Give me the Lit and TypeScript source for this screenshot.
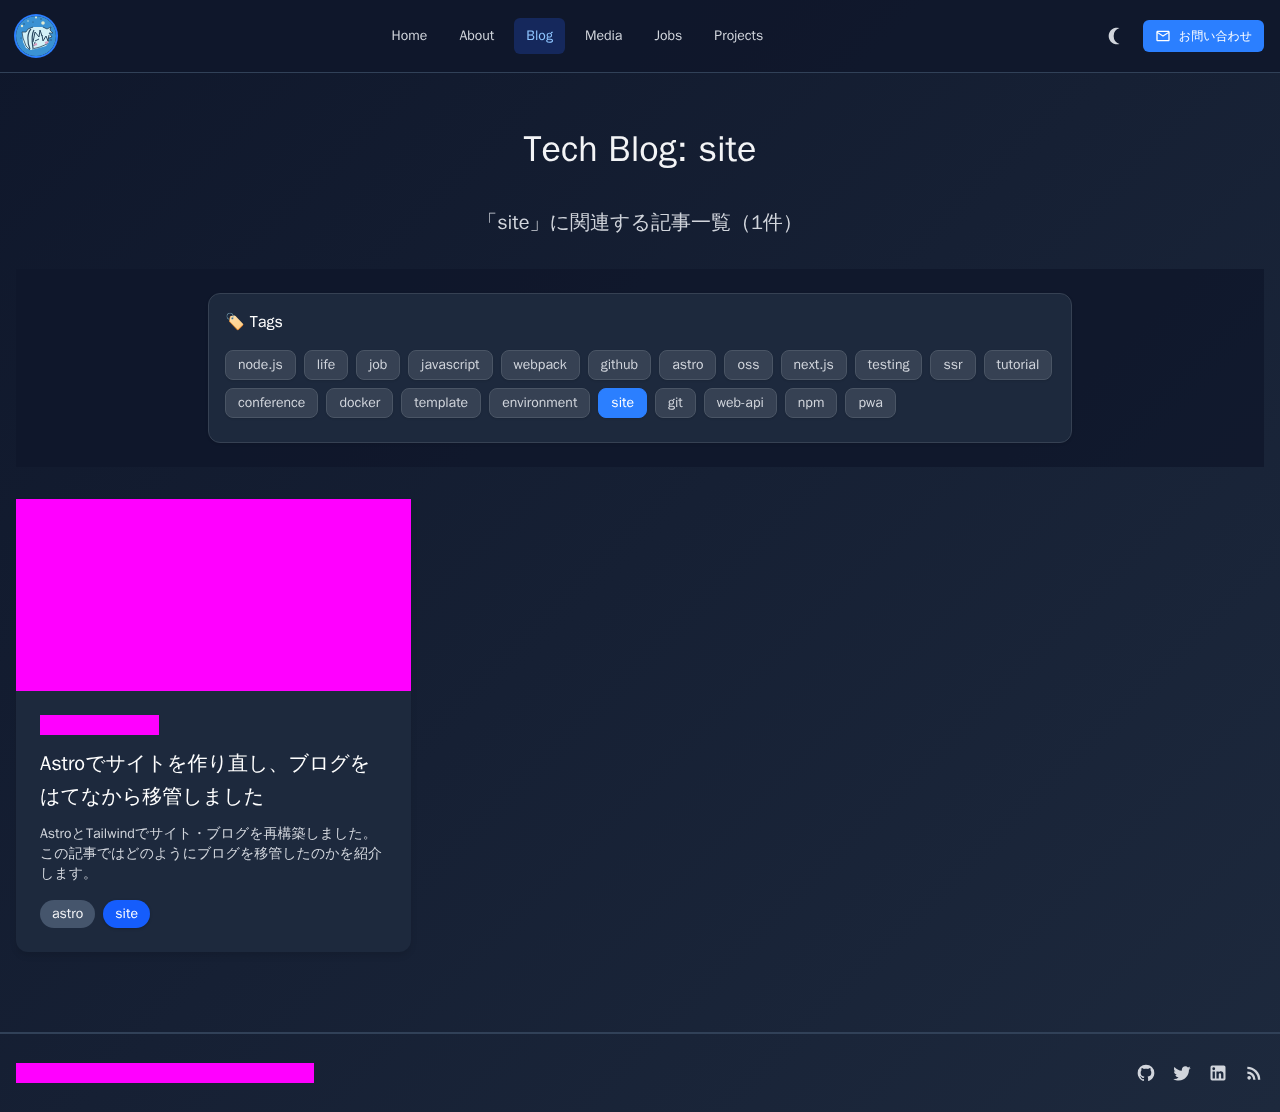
import { LitElement, html, svg, css } from "lit";
import { customElement } from "lit/decorators.js";
import { classMap } from "lit/directives/class-map.js";

const NAV = ["Home", "About", "Blog", "Media", "Jobs", "Projects"];

const TAGS = [
  "node.js", "life", "job", "javascript", "webpack", "github", "astro", "oss",
  "next.js", "testing", "ssr", "tutorial", "conference", "docker", "template",
  "environment", "site", "git", "web-api", "npm", "pwa",
];

const CURRENT_TAG = "site";

const SOCIAL = [
  {
    name: "GitHub",
    path: svg`<path d="M12 2A10 10 0 0 0 2 12c0 4.42 2.87 8.17 6.84 9.5.5.08.66-.23.66-.5v-1.69c-2.77.6-3.36-1.34-3.36-1.34-.46-1.16-1.11-1.47-1.11-1.47-.91-.62.07-.6.07-.6 1 .07 1.53 1.03 1.53 1.03.87 1.52 2.34 1.07 2.91.83.09-.65.35-1.09.63-1.34-2.22-.25-4.55-1.11-4.55-4.92 0-1.11.38-2 1.03-2.71-.1-.25-.45-1.29.1-2.64 0 0 .84-.27 2.75 1.02.79-.22 1.65-.33 2.5-.33s1.71.11 2.5.33c1.91-1.29 2.75-1.02 2.75-1.02.55 1.35.2 2.39.1 2.64.65.71 1.03 1.6 1.03 2.71 0 3.82-2.34 4.66-4.57 4.91.36.31.69.92.69 1.85V21c0 .27.16.59.67.5C19.14 20.16 22 16.42 22 12A10 10 0 0 0 12 2"/>`,
  },
  {
    name: "Twitter",
    path: svg`<path d="M22.46 6c-.77.35-1.6.58-2.46.69.88-.53 1.56-1.37 1.88-2.38-.83.5-1.75.85-2.72 1.05C18.37 4.5 17.26 4 16 4c-2.35 0-4.27 1.92-4.27 4.29 0 .34.04.67.11.98C8.28 9.09 5.11 7.38 3 4.79c-.37.63-.58 1.37-.58 2.15 0 1.49.75 2.81 1.91 3.56-.71 0-1.37-.2-1.95-.5v.03c0 2.08 1.48 3.82 3.44 4.21a4.2 4.2 0 0 1-1.93.07 4.28 4.28 0 0 0 4 2.98 8.52 8.52 0 0 1-5.33 1.84q-.51 0-1.02-.06C3.44 20.29 5.7 21 8.12 21 16 21 20.33 14.46 20.33 8.79c0-.19 0-.37-.01-.56.84-.6 1.56-1.36 2.14-2.23"/>`,
  },
  {
    name: "LinkedIn",
    path: svg`<path d="M19 3a2 2 0 0 1 2 2v14a2 2 0 0 1-2 2H5a2 2 0 0 1-2-2V5a2 2 0 0 1 2-2zm-.5 15.5v-5.3a3.26 3.26 0 0 0-3.26-3.26c-.85 0-1.84.52-2.32 1.3v-1.11h-2.79v8.37h2.79v-4.93c0-.77.62-1.4 1.39-1.4a1.4 1.4 0 0 1 1.4 1.4v4.93zM6.88 8.56a1.68 1.68 0 0 0 1.68-1.68c0-.93-.75-1.69-1.68-1.69a1.69 1.69 0 0 0-1.69 1.69c0 .93.76 1.68 1.69 1.68m1.39 9.94v-8.37H5.5v8.37z"/>`,
  },
  {
    name: "RSS",
    path: svg`<path d="M6.18 15.64a2.18 2.18 0 0 1 2.18 2.18C8.36 19 7.38 20 6.18 20 5 20 4 19 4 17.82a2.18 2.18 0 0 1 2.18-2.18M4 4.44A15.56 15.56 0 0 1 19.56 20h-2.83A12.73 12.73 0 0 0 4 7.27zm0 5.66a9.9 9.9 0 0 1 9.9 9.9h-2.83A7.07 7.07 0 0 0 4 12.93z"/>`,
  },
];

@customElement("site-header")
export class SiteHeader extends LitElement {
  static styles = css`
    :host { display: block; background: rgb(15 23 43 / 0.9); border-bottom: 1px solid #314158; }
    .bar { display: flex; align-items: center; justify-content: space-between; height: 72px; padding: 0 16px; }
    a { color: inherit; text-decoration: none; }
    .logo { display: block; width: 40px; height: 40px; border-radius: 50%; box-shadow: 0 0 0 2px #2b7fff; }
    .logo svg { display: block; width: 40px; height: 40px; }
    nav { display: flex; gap: 8px; }
    .link { padding: 8px 12px; border-radius: 6px; font-size: 14px; line-height: 20px; color: #d1d5dc; }
    .current { background: rgb(28 57 142 / 0.5); color: #8ec5ff; }
    .actions { display: flex; align-items: center; gap: 8px; }
    .theme { display: flex; padding: 8px; border: 0; border-radius: 8px; background: none; color: #d1d5dc; }
    .theme svg { width: 20px; height: 20px; fill: currentColor; }
    .contact { display: flex; align-items: center; gap: 8px; padding: 8px 12px; border-radius: 6px; background: #2b7fff; color: #fff; font-size: 12px; line-height: 16px; }
    .contact svg { width: 16px; height: 16px; fill: currentColor; }
  `;

  render() {
    return html`
      <header class="bar">
        <a class="logo" href="#" aria-label="Home">
          <svg viewBox="0 0 40 40" aria-hidden="true">
            <circle cx="20" cy="20" r="20" fill="#3a92d3" />
            <g fill="#e2ead0">
              <circle cx="27" cy="7" r="1.800" /><circle cx="6" cy="10" r="1.200" />
              <circle cx="20" cy="1.500" r="1" /><circle cx="12" cy="5" r=".7" />
            </g>
            <g fill="#28506e">
              <circle cx="8" cy="8" r=".7" /><circle cx="25" cy="3" r=".7" /><circle cx="17" cy="6" r=".6" /><circle cx="5" cy="22" r=".6" /><circle cx="35" cy="24" r=".7" />
            </g>
            <path d="M6 16l4 0 2-3 6-2 8 0 5 2 4-2-1 3 3 3-4 0 3 4-3 1 0 4-3 4-7 2-8 2-5-2-3-6z" fill="#d4f1f7" />
            <path d="M6 16l4 0 2-3 5-2M6 16l1 6 3 8 4 4M27 11l4 2 4-2-1 3 3 3-4 0 3 4-3 1M33 24l-2 4-7 3-8 2" fill="none" stroke="#28465e" stroke-width=".8" stroke-linejoin="round" />
            <path d="M15 13c-4 4-4 13-1 20M18 14c-3 5-2 12-1 18" fill="none" stroke="#28465e" stroke-width="1.200" />
            <path d="M17 26l2-10 4 5 1-7 2 6M19 25l4-2M26 19l1 6 3-5 2 5 1-6M18 30l1-4" fill="none" stroke="#28465e" stroke-width="1" stroke-linejoin="round" />
            <path d="M18 29l3-1M29 27l3-1" stroke="#d99abf" stroke-width="2" />
          </svg>
        </a>
        <nav aria-label="Main">
          ${NAV.map((name) => html`<a class=${classMap({ link: true, current: name === "Blog" })} href="#">${name}</a>`)}
        </nav>
        <div class="actions">
          <button class="theme" type="button" aria-label="Toggle theme">
            <svg viewBox="0 0 24 24" aria-hidden="true"><path d="M2 12a10 10 0 0 0 13 9.540a10 10 0 0 1 0-19.080A10 10 0 0 0 2 12" /></svg>
          </button>
          <a class="contact" href="#">
            <svg viewBox="0 0 24 24" aria-hidden="true"><path d="M22 6c0-1.100-.9-2-2-2H4c-1.100 0-2 .9-2 2v12c0 1.100.9 2 2 2h16c1.100 0 2-.9 2-2zm-2 0l-8 5-8-5zm0 12H4V8l8 5 8-5z" /></svg>
            <span>お問い合わせ</span>
          </a>
        </div>
      </header>
    `;
  }
}

@customElement("tag-panel")
export class TagPanel extends LitElement {
  static styles = css`
    :host { display: block; padding: 24px 16px; background: rgb(15 23 43 / 0.8); }
    .panel { box-sizing: border-box; max-width: 864px; margin: 0 auto; padding: 16px 16px 24px; border: 1px solid #364153; border-radius: 12px; background: #1d293d; box-shadow: 0 1px 3px rgb(0 0 0 / 0.1); }
    h2 { margin: 0 0 16px; font-size: 16px; font-weight: 400; line-height: 24px; color: #fff; }
    .list { display: flex; flex-wrap: wrap; gap: 8px; }
    .tag { padding: 4px 12px; border: 1px solid #4a5565; border-radius: 8px; background: #364153; color: #d1d5dc; font-size: 14px; line-height: 20px; text-decoration: none; box-shadow: 0 1px 2px rgb(0 0 0 / 0.1); }
    .active { border-color: #2b7fff; background: #2b7fff; color: #fff; }
  `;

  render() {
    return html`
      <section class="panel">
        <h2>🏷️ Tags</h2>
        <div class="list">
          ${TAGS.map((tag) => html`<a class=${classMap({ tag: true, active: tag === CURRENT_TAG })} href="#">${tag}</a>`)}
        </div>
      </section>
    `;
  }
}

@customElement("post-card")
export class PostCard extends LitElement {
  static styles = css`
    :host { display: block; border-radius: 0 0 12px 12px; background: #1d293d; box-shadow: 0 4px 6px rgb(0 0 0 / 0.1); }
    .cover { height: 192px; background: #f0f; }
    .body { padding: 24px; }
    .date { width: 119px; height: 20px; margin-bottom: 12px; background: #f0f; }
    h2 { margin: 0 0 11px; font-size: 20px; font-weight: 400; line-height: 33px; color: #fff; }
    p { margin: 0 0 16px; font-size: 14px; line-height: 20px; color: #d1d5dc; }
    .tags { display: flex; gap: 8px; }
    .pill { padding: 4px 12px; border-radius: 14px; background: #45556c; color: #f3f4f6; font-size: 14px; line-height: 20px; text-decoration: none; }
    .active { background: #155dfc; color: #fff; box-shadow: 0 1px 3px rgb(0 0 0 / 0.2); }
  `;

  render() {
    return html`
      <article>
        <div class="cover"></div>
        <div class="body">
          <div class="date"></div>
          <h2>Astroでサイトを作り直し、ブログをはてなから移管しました</h2>
          <p>AstroとTailwindでサイト・ブログを再構築しました。この記事ではどのようにブログを移管したのかを紹介します。</p>
          <div class="tags">
            <a class="pill" href="#">astro</a>
            <a class="pill active" href="#">site</a>
          </div>
        </div>
      </article>
    `;
  }
}

@customElement("site-footer")
export class SiteFooter extends LitElement {
  static styles = css`
    :host { display: block; border-top: 2px solid #314158; }
    .bar { display: flex; align-items: center; justify-content: space-between; height: 78px; padding: 0 16px; }
    .copyright { width: 298px; height: 20px; background: #f0f; }
    .social { display: flex; gap: 16px; color: #d1d5dc; }
    a { display: block; color: inherit; }
    svg { display: block; width: 20px; height: 20px; fill: currentColor; }
  `;

  render() {
    return html`
      <footer class="bar">
        <div class="copyright"></div>
        <div class="social">
          ${SOCIAL.map((s) => html`<a href="#" aria-label=${s.name}><svg viewBox="0 0 24 24" aria-hidden="true">${s.path}</svg></a>`)}
        </div>
      </footer>
    `;
  }
}

@customElement("app-root")
export class AppRoot extends LitElement {
  static styles = css`
    :host {
      display: flex;
      flex-direction: column;
      min-height: 100vh;
      background: linear-gradient(135deg, #0f172b, #1d293d);
      color: #f3f4f6;
      font-family: "WenQuanYi Zen Hei", "Liberation Sans", "Noto Sans CJK JP", sans-serif;
    }
    main { flex: 1; padding: 48px 16px; }
    .intro { text-align: center; }
    h1 { margin: 0 0 32px; font-size: 36px; font-weight: 400; line-height: 56px; }
    .lead { margin: 0 0 32px; font-size: 20px; line-height: 28px; color: #d1d5dc; }
    .posts { display: grid; grid-template-columns: repeat(3, minmax(0, 1fr)); gap: 32px; margin-top: 32px; }
  `;

  render() {
    return html`
      <site-header></site-header>
      <main>
        <div class="intro">
          <h1>Tech Blog: site</h1>
          <p class="lead">「site」に関連する記事一覧（1件）</p>
        </div>
        <tag-panel></tag-panel>
        <div class="posts"><post-card></post-card></div>
      </main>
      <site-footer></site-footer>
    `;
  }
}
